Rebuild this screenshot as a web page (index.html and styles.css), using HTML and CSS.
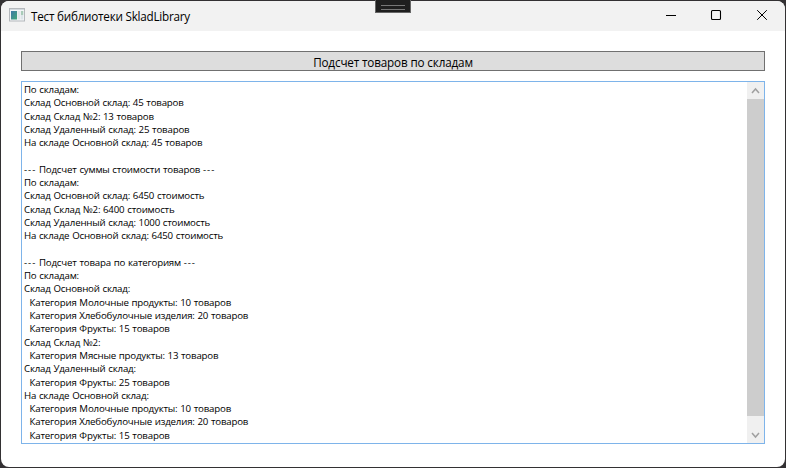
FILE: index.html
```html
<!DOCTYPE html>
<html lang="ru">
<head>
<meta charset="utf-8">
<title>Тест библиотеки SkladLibrary</title>
<link rel="stylesheet" href="styles.css">
</head>
<body>
<div class="window">
  <header class="titlebar">
    <svg class="app-icon" width="16" height="14" viewBox="0 0 16 14">
      <defs><linearGradient id="pane" x1="0" y1="0" x2="1" y2="1"><stop offset="0" stop-color="#3e78a8"/><stop offset="1" stop-color="#43a878"/></linearGradient></defs>
      <rect x=".5" y=".5" width="15" height="12.5" fill="#f4f6f8" stroke="#b4b8bc"/>
      <path d="M1 1.5h14" stroke="#d3d9de"/>
      <rect x="2" y="3" width="6" height="8.5" fill="url(#pane)"/>
      <rect x="8.5" y="3" width="3" height="8.5" fill="#e2e7ea"/>
      <rect x="12" y="3" width="2.3" height="4" fill="#a9cbb9"/>
      <rect x="12" y="7" width="2.3" height="4.5" fill="#dde5ea"/>
    </svg>
    <h1 class="title">Тест библиотеки SkladLibrary</h1>
    <div class="controls">
      <svg width="46" height="29" viewBox="0 0 46 29"><path d="M19 14.5h10" stroke="#000" fill="none"/></svg>
      <svg width="46" height="29" viewBox="0 0 46 29"><rect x="18.5" y="9.5" width="9" height="9" rx="1" stroke="#000" stroke-width="1.1" fill="none"/></svg>
      <svg width="46" height="29" viewBox="0 0 46 29"><path d="M18.2 9.2l9.6 9.6M27.8 9.2l-9.6 9.6" stroke="#000" fill="none"/></svg>
    </div>
  </header>
  <main class="content">
    <button class="count-button">Подсчет товаров по складам</button>
    <section class="output">
<pre class="log">По складам:
Склад Основной склад: 45 товаров
Склад Склад №2: 13 товаров
Склад Удаленный склад: 25 товаров
На складе Основной склад: 45 товаров

<span class="dashes">---</span> Подсчет суммы стоимости товаров <span class="dashes">---</span>
По складам:
Склад Основной склад: 6450 стоимость
Склад Склад №2: 6400 стоимость
Склад Удаленный склад: 1000 стоимость
На складе Основной склад: 6450 стоимость

<span class="dashes">---</span> Подсчет товара по категориям <span class="dashes">---</span>
По складам:
Склад Основной склад:
  Категория Молочные продукты: 10 товаров
  Категория Хлебобулочные изделия: 20 товаров
  Категория Фрукты: 15 товаров
Склад Склад №2:
  Категория Мясные продукты: 13 товаров
Склад Удаленный склад:
  Категория Фрукты: 25 товаров
На складе Основной склад:
  Категория Молочные продукты: 10 товаров
  Категория Хлебобулочные изделия: 20 товаров
  Категория Фрукты: 15 товаров</pre>
      <div class="scrollbar">
        <svg class="arrow" width="17" height="17" viewBox="0 0 17 17"><path d="M5 11l3.5-4 3.5 4" stroke="#a0a0a0" stroke-width="1.5" fill="none"/></svg>
        <div class="thumb"></div>
        <svg class="arrow arrow-down" width="17" height="17" viewBox="0 0 17 17"><path d="M5 7l3.5 4L12 7" stroke="#a0a0a0" stroke-width="1.5" fill="none"/></svg>
      </div>
    </section>
  </main>
</div>
<div class="grip"></div>
</body>
</html>
```
FILE: styles.css
```css
* { box-sizing: border-box; }
body {
  margin: 0;
  height: 468px;
  padding: 1px;
  overflow: hidden;
  background: #333133;
  font-family: "Open Sans", "Noto Sans", sans-serif;
  color: #000;
}
.window {
  height: 466px;
  display: flex;
  flex-direction: column;
  background: #fff;
  border-radius: 8px;
  overflow: hidden;
}
.titlebar {
  height: 30px;
  flex: none;
  display: flex;
  align-items: center;
  padding-left: 8px;
  background: #f2f2f2;
}
.app-icon { margin-right: 6px; margin-bottom: 2px; }
.title {
  margin: 0;
  font-size: 11.7px;
  font-weight: 400;
  line-height: 28px;
  letter-spacing: -0.23px;
}
.controls { display: flex; margin-left: auto; align-self: flex-start; }
.content {
  flex: 1;
  display: flex;
  flex-direction: column;
  gap: 10px;
  padding: 20px 20px 23px;
}
.count-button {
  height: 20px;
  flex: none;
  padding: 0;
  border: 1px solid #707070;
  background: #ddd;
  color: #000;
  font: 11.7px/20px "Open Sans", "Noto Sans", sans-serif;
  letter-spacing: -0.15px;
}
.output {
  height: 363px;
  display: flex;
  border: 1px solid #7eb4ea;
}
.log {
  flex: 1;
  margin: 0;
  padding: 1px 2px 0;
  overflow: hidden;
  font: 9.7px/13.3px "Open Sans", "Noto Sans", sans-serif;
  letter-spacing: -0.19px;
  word-spacing: 0.45px;
}
.dashes { letter-spacing: 0.95px; }
.scrollbar {
  width: 17px;
  display: flex;
  flex-direction: column;
  background: #f0f0f0;
}
.arrow { display: block; flex: none; }
.arrow-down { margin-top: auto; }
.thumb { height: 317px; background: #cdcdcd; }
.grip {
  position: absolute;
  left: 375px;
  top: 0;
  width: 36px;
  height: 13px;
  padding: 5px 5px 4px;
  border: 1px solid #666;
  border-top: 0;
  background: #1f1f1f;
}
.grip::before {
  content: "";
  display: block;
  height: 3px;
  border-top: 1px solid #777;
  border-bottom: 1px solid #777;
}
```
